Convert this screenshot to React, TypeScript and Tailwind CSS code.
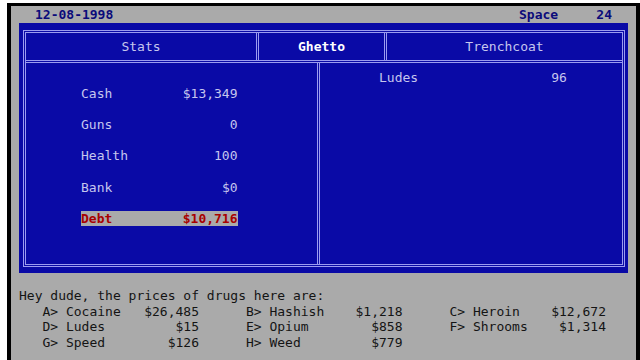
import React from "react";

const mono = { fontFamily: '"DejaVu Sans Mono", "Liberation Mono", monospace' };

const stats = [
  { label: "Cash", value: "$13,349" },
  { label: "Guns", value: "0" },
  { label: "Health", value: "100" },
  { label: "Bank", value: "$0" },
];

const prices = [
  [
    { key: "A", name: "Cocaine", price: "$26,485" },
    { key: "B", name: "Hashish", price: "$1,218" },
    { key: "C", name: "Heroin", price: "$12,672" },
  ],
  [
    { key: "D", name: "Ludes", price: "$15" },
    { key: "E", name: "Opium", price: "$858" },
    { key: "F", name: "Shrooms", price: "$1,314" },
  ],
  [
    { key: "G", name: "Speed", price: "$126" },
    { key: "H", name: "Weed", price: "$779" },
  ],
];

export default function App() {
  return (
    <div
      className="w-[640px] h-[360px] bg-white pt-[3px] pl-[7px] overflow-hidden text-[13px] leading-[15.6px]"
      style={mono}
    >
      <div className="w-[633px] h-[357px] bg-[#aaaaaa] border-t-[3px] border-l-[4px] border-r-[4px] border-black flex flex-col">
        {/* top status line */}
        <div className="h-[17px] flex items-start justify-between pl-[24px] pr-[24px] pt-[1px] font-bold text-[#0a0a7a]">
          <span>12-08-1998</span>
          <span className="w-[93px] flex justify-between">
            <span>Space</span>
            <span>24</span>
          </span>
        </div>

        {/* blue screen */}
        <div className="mx-[8px] h-[250px] bg-[#0a0aa6] pt-[7px] pl-[4px] pr-[3px] pb-[6px]">
          <div className="h-full border-[3px] border-double border-[#9c9cf0] flex flex-col">
            <div className="h-[30px] flex border-b-[3px] border-double border-[#9c9cf0] text-[#c6c6ee]">
              <div className="w-[230px] flex items-center justify-center">Stats</div>
              <div className="w-[128px] flex items-center justify-center border-l-[3px] border-double border-[#9c9cf0] font-bold text-white">
                Ghetto
              </div>
              <div className="flex-1 flex items-center justify-center border-l-[3px] border-double border-[#9c9cf0]">
                Trenchcoat
              </div>
            </div>
            <div className="flex-1 flex text-[#c6c6ee]">
              <div className="w-[291px] pt-[23px] pl-[55px] flex flex-col gap-[15.6px]">
                {stats.map((s) => (
                  <div key={s.label} className="w-[20ch] flex justify-between">
                    <span>{s.label}</span>
                    <span>{s.value}</span>
                  </div>
                ))}
                <div className="w-[20ch] flex justify-between bg-[#aaaaaa] text-[#a80000] font-bold">
                  <span>Debt</span>
                  <span>$10,716</span>
                </div>
              </div>
              <div className="flex-1 border-l-[3px] border-double border-[#9c9cf0] pt-[7px] pl-[59px]">
                <div className="w-[24ch] flex justify-between">
                  <span>Ludes</span>
                  <span>96</span>
                </div>
              </div>
            </div>
          </div>
        </div>

        {/* price list */}
        <div className="pt-[15px] pl-[8px] text-[#141414]">
          <div>Hey dude, the prices of drugs here are:</div>
          {prices.map((row, i) => (
            <div key={i} className="flex pl-[3ch]">
              {row.map((p) => (
                <div key={p.key} className="w-[26ch] shrink-0">
                  <div className="w-[20ch] flex justify-between whitespace-pre">
                    <span>{`${p.key}> ${p.name}`}</span>
                    <span>{p.price}</span>
                  </div>
                </div>
              ))}
            </div>
          ))}
        </div>
      </div>
    </div>
  );
}
